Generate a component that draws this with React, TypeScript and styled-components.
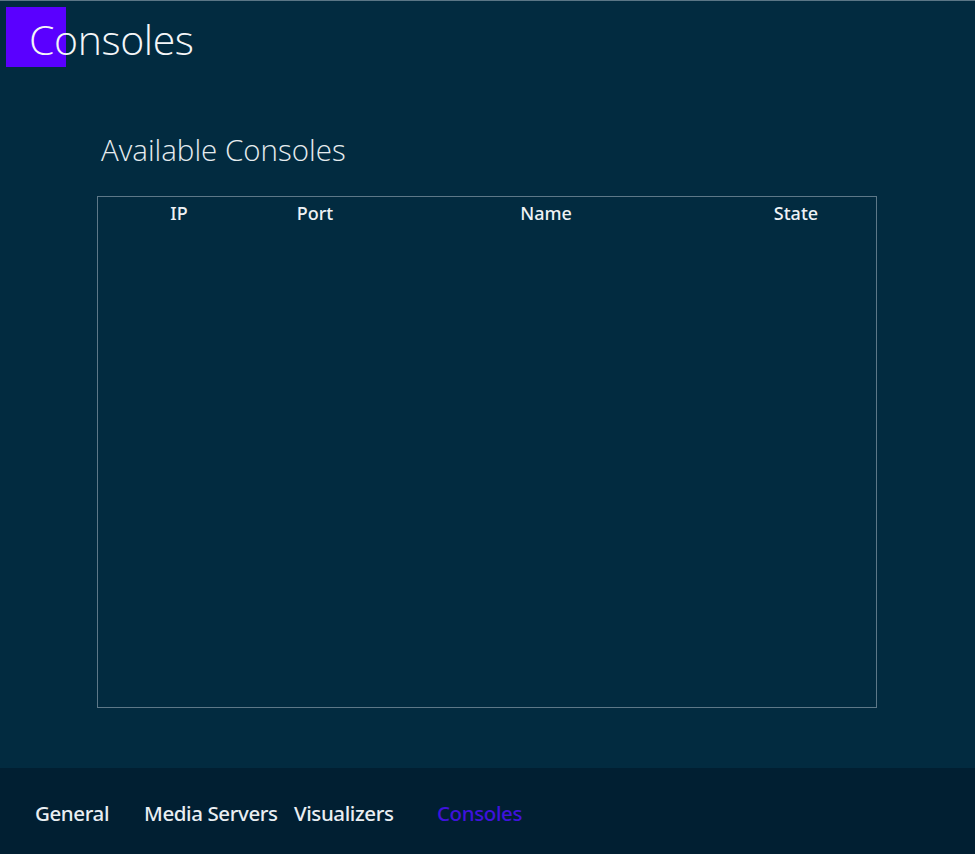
import React from 'react';
import styled, { createGlobalStyle } from 'styled-components';

const GlobalStyle = createGlobalStyle`
  html, body {
    margin: 0;
    padding: 0;
    height: 100%;
    background: #022b40;
  }
  #root {
    height: 100%;
  }
`;

const Page = styled.div`
  height: 854px;
  display: flex;
  flex-direction: column;
  background: #022b40;
  border-top: 1px solid #5b7686;
  box-sizing: border-box;
  font-family: 'Open Sans', 'Noto Sans', sans-serif;
  color: #f2f5f7;
  overflow: hidden;
`;

const Header = styled.header`
  display: flex;
  align-items: center;
  padding: 6px 0 0 6px;
  height: 60px;
`;

const Tile = styled.div`
  width: 60px;
  height: 60px;
  background: #5a00ff;
  flex-shrink: 0;
`;

const Title = styled.h1`
  margin: 4px 0 0 -37px;
  font-size: 41px;
  font-weight: 300;
  letter-spacing: -0.4px;
  line-height: 60px;
  color: #f4f6f8;
  position: relative;
`;

const Main = styled.main`
  flex: 1;
  padding: 63px 98px 0 97px;
`;

const SubTitle = styled.h2`
  margin: 0 0 26px 4px;
  font-size: 29.5px;
  font-weight: 300;
  line-height: 40px;
  color: #e6ecef;
`;

const TableBox = styled.div`
  width: 780px;
  height: 512px;
  box-sizing: border-box;
  border: 1px solid #5d7888;
`;

const HeadRow = styled.div`
  display: grid;
  grid-template-columns: 162px 110px 352px 148px;
  padding-top: 4px;
`;

const HeadCell = styled.div`
  text-align: center;
  font-family: 'Noto Sans', 'Open Sans', sans-serif;
  font-size: 18px;
  font-weight: 500;
  line-height: 24px;
  color: #eef2f5;
`;

const Footer = styled.nav`
  height: 86px;
  background: #011f32;
  display: grid;
  grid-template-columns: 109px 150px 143px auto;
  align-items: center;
  padding: 4px 0 0 35px;
  box-sizing: border-box;
`;

const NavItem = styled.div<{ $active?: boolean }>`
  font-family: 'Noto Sans', 'Open Sans', sans-serif;
  font-size: 20.5px;
  font-weight: 500;
  letter-spacing: -0.4px;
  color: ${(p) => (p.$active ? '#3f12dc' : '#e9eef2')};
  white-space: nowrap;
`;

const columns = ['IP', 'Port', 'Name', 'State'];
const tabs = ['General', 'Media Servers', 'Visualizers', 'Consoles'];

export default function App() {
  return (
    <>
      <GlobalStyle />
      <Page>
        <Header>
          <Tile />
          <Title>Consoles</Title>
        </Header>
        <Main>
          <SubTitle>Available Consoles</SubTitle>
          <TableBox>
            <HeadRow>
              {columns.map((c) => (
                <HeadCell key={c}>{c}</HeadCell>
              ))}
            </HeadRow>
          </TableBox>
        </Main>
        <Footer>
          {tabs.map((t) => (
            <NavItem key={t} $active={t === 'Consoles'}>
              {t}
            </NavItem>
          ))}
        </Footer>
      </Page>
    </>
  );
}
